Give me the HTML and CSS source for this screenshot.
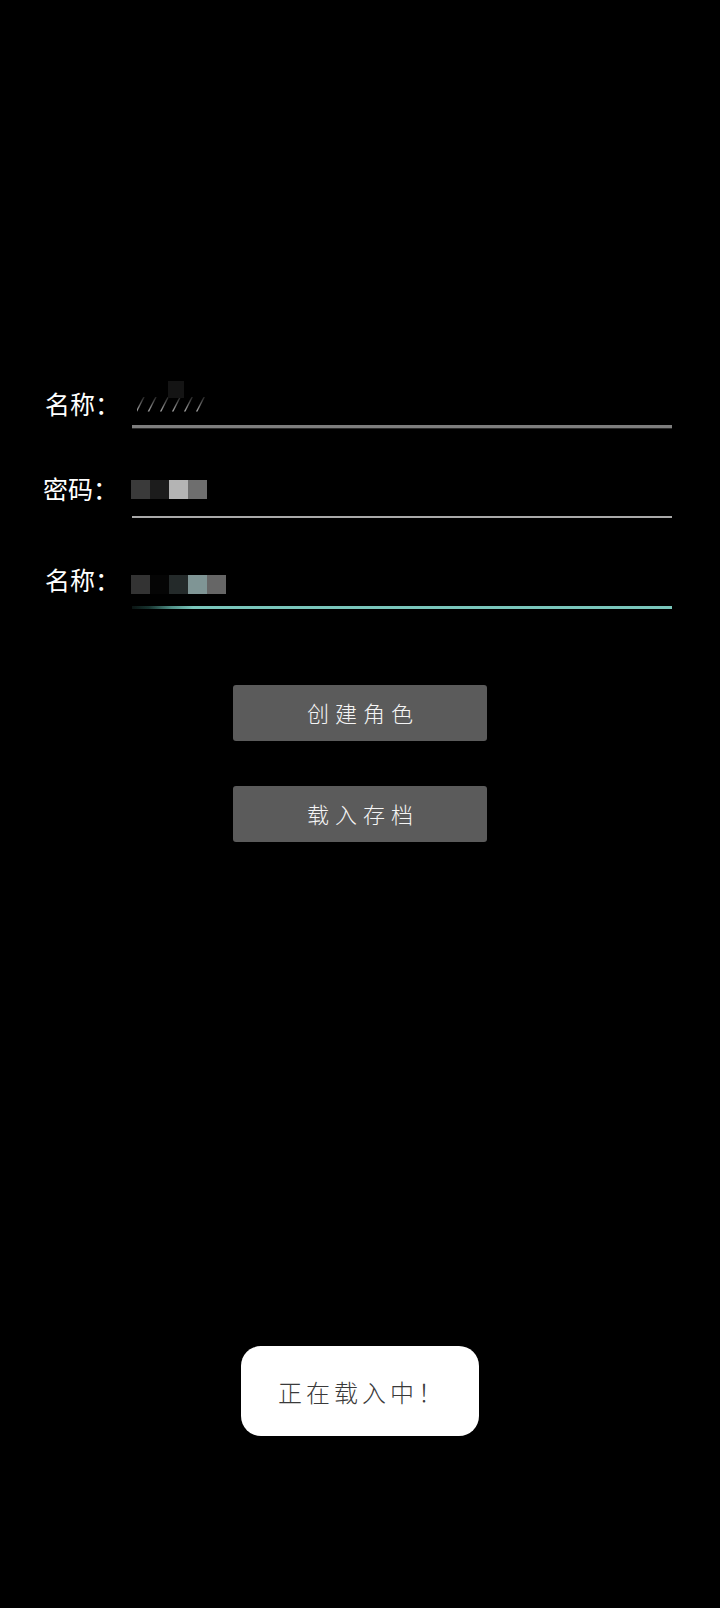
FILE: index.html
```html
<!DOCTYPE html>
<html lang="zh-CN">
<head>
<meta charset="utf-8">
<title>登录</title>
<link rel="stylesheet" href="styles.css">
</head>
<body>
<main class="screen">
  <section class="form">
    <div class="row row-first">
      <span class="label">名称：</span>
      <div class="field field-name">
        <span class="slashes">//////</span>
        <span class="ghost-block"></span>
      </div>
    </div>
    <div class="row">
      <span class="label label-pass">密码：</span>
      <div class="field field-pass">
        <span class="mask">
          <i class="px c1"></i><i class="px c2"></i><i class="px c3"></i><i class="px c4"></i>
        </span>
      </div>
    </div>
    <div class="row">
      <span class="label">名称：</span>
      <div class="field field-active">
        <span class="mask mask-low">
          <i class="px d1"></i><i class="px d2"></i><i class="px d3"></i><i class="px d4"></i><i class="px d5"></i>
        </span>
      </div>
    </div>
  </section>
  <section class="actions">
    <button class="btn" type="button">创建角色</button>
    <button class="btn" type="button">载入存档</button>
  </section>
  <div class="toast">正在载入中！</div>
</main>
</body>
</html>
```

FILE: styles.css
```css
html, body {
  margin: 0;
  padding: 0;
  background: #000;
}
body {
  width: 720px;
  height: 1608px;
  overflow: hidden;
  font-family: "Noto Sans CJK SC", "Noto Sans", sans-serif;
  font-weight: 300;
  color: #fff;
}
.screen {
  position: relative;
  width: 720px;
  height: 1608px;
}
.form {
  display: flex;
  flex-direction: column;
  gap: 34px;
  padding: 381px 48px 0 45px;
}
.row {
  display: flex;
  align-items: center;
}
.label {
  flex: 0 0 87px;
  margin-bottom: 4px;
  font-size: 25px;
  font-weight: 400;
  line-height: 30px;
  color: #fff;
  white-space: nowrap;
}
.label-pass {
  margin-left: -2px;
  flex-basis: 89px;
}
.field {
  flex: 1;
  height: 54px;
  display: flex;
  align-items: center;
  position: relative;
  border-bottom: 2px solid #a9a9a9;
}
.row-first .field {
  height: 44px;
}
.field-name {
  border-bottom: 3px solid #7e7e7e;
  box-shadow: 0 1px 0 #2a2a2a;
  align-items: flex-end;
}
.field-active {
  border-bottom: 3px solid #7ac6bb;
  border-image: linear-gradient(90deg, #0a1211 0, #173430 18px, #4f8f86 40px, #7ac6bb 62px, #7ac6bb 100%) 1;
}
.slashes {
  margin: 0 0 12px 5px;
  font-family: "DejaVu Sans", sans-serif;
  font-style: italic;
  font-size: 18px;
  line-height: 18px;
  letter-spacing: 6px;
  background: linear-gradient(180deg, #111 0%, #5a5a5a 45%, #b8b8b8 100%);
  -webkit-background-clip: text;
  background-clip: text;
  color: transparent;
}
.ghost-block {
  position: absolute;
  left: 36px;
  top: 0;
  width: 16px;
  height: 17px;
  background: #141414;
}
.mask {
  display: flex;
  margin-left: -1px;
}
.mask-low {
  margin-top: 10px;
}
.px {
  display: block;
  width: 19px;
  height: 19px;
}
.c1 { background: #3a3a3a; }
.c2 { background: #1c1c1c; }
.c3 { background: #b4b4b4; }
.c4 { background: #6e6e6e; }
.d1 { background: #333333; }
.d2 { background: #050505; }
.d3 { background: #242a2a; }
.d4 { background: #7f9595; }
.d5 { background: #666666; }
.actions {
  display: flex;
  flex-direction: column;
  align-items: center;
  gap: 45px;
  margin-top: 76px;
}
.btn {
  width: 254px;
  height: 56px;
  border: none;
  border-radius: 3px;
  background: #5b5b5b;
  color: #f5f5f5;
  font-family: "Noto Sans CJK SC", "Noto Sans", sans-serif;
  font-weight: 300;
  font-size: 22px;
  letter-spacing: 6px;
  text-indent: 6px;
  padding: 0 0 2px;
}
.toast {
  position: absolute;
  left: 241px;
  top: 1346px;
  width: 238px;
  height: 90px;
  border-radius: 20px;
  background: #fff;
  color: #3a3a3a;
  display: flex;
  align-items: center;
  justify-content: center;
  font-size: 24px;
  letter-spacing: 4px;
  text-indent: 4px;
}
```
